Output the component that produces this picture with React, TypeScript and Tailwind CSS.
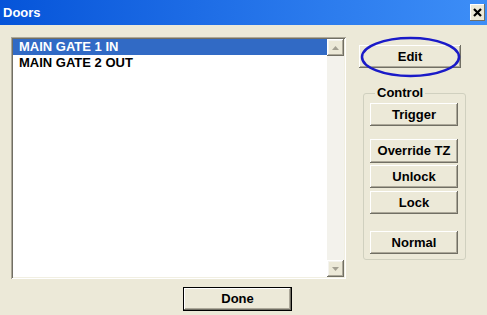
import React from "react";

const btn =
  "flex items-center justify-center bg-[#ece9d8] text-black font-bold text-[13px] shadow-[inset_-1px_-1px_#716f64,inset_1px_1px_#ffffff,inset_-2px_-2px_#aca899]";

function Btn({ label, cls }: { label: string; cls: string }) {
  return <div className={`${btn} ${cls}`}>{label}</div>;
}

function ScrollBtn({ up }: { up: boolean }) {
  return (
    <div className="w-[17px] h-[17px] flex items-center justify-center bg-[#ece9d8] shadow-[inset_-1px_-1px_#716f64,inset_1px_1px_#ffffff,inset_-2px_-2px_#aca899,inset_2px_2px_#f4f3ee]">
      <svg width="7" height="4" viewBox="0 0 7 4">
        {up ? (
          <polygon points="3.5,0 7,4 0,4" fill="#a3a092" />
        ) : (
          <polygon points="0,0 7,0 3.5,4" fill="#a3a092" />
        )}
      </svg>
    </div>
  );
}

export default function App() {
  return (
    <div
      className="w-[487px] h-[315px] bg-[#ece9d8] flex flex-col overflow-hidden"
      style={{ fontFamily: '"Liberation Sans", Arial, sans-serif' }}
    >
      <div className="h-[25px] flex items-center justify-between pl-[3px] pr-[2px] bg-gradient-to-r from-[#0554d9] to-[#3d8ef7]">
        <span className="text-white font-bold text-[13px]">Doors</span>
        <div className="w-[15px] h-[17px] flex items-center justify-center bg-[#ece9d8] shadow-[inset_-1px_-1px_#716f64,inset_1px_1px_#ffffff]">
          <svg width="9" height="9" viewBox="0 0 9 9">
            <path d="M1 1 L8 8 M8 1 L1 8" stroke="#000" strokeWidth="2.2" />
          </svg>
        </div>
      </div>
      <div className="flex flex-1 relative">
        <div className="flex flex-col pl-[11px] pt-[12px]">
          <div className="w-[335px] h-[242px] bg-white flex p-[2px] shadow-[inset_1px_1px_#aca899,inset_-1px_-1px_#ffffff,inset_2px_2px_#716f64,inset_-2px_-2px_#f1efe2]">
            <div className="flex-1 flex flex-col pt-[0px]">
              <div className="h-[16px] bg-[#316ac5] text-white font-bold text-[13px] leading-[16px] pl-[6px]">
                MAIN GATE 1 IN
              </div>
              <div className="h-[16px] text-black font-bold text-[13px] leading-[16px] pl-[6px]">
                MAIN GATE 2 OUT
              </div>
            </div>
            <div className="w-[17px] flex flex-col justify-between bg-[#f3f2ec]">
              <ScrollBtn up={true} />
              <ScrollBtn up={false} />
            </div>
          </div>
          <div className="ml-[172px] mt-[8px] w-[109px] h-[24px] border border-black flex">
            <Btn label="Done" cls="flex-1" />
          </div>
        </div>
        <div className="flex flex-col ml-[13px] pt-[20px]">
          <Btn label="Edit" cls="w-[102px] h-[23px]" />
          <fieldset className="ml-[4px] mt-[18px] w-[103px] h-[174px] border border-[#d0d0bf] rounded-[3px] pl-[6px] pr-[6px]">
            <legend className="ml-[5px] px-[2px] text-[13px] font-bold text-black leading-[14px]">Control</legend>
            <Btn label="Trigger" cls="w-[88px] h-[23px] mt-[3px]" />
            <Btn label="Override TZ" cls="w-[88px] h-[24px] mt-[13px]" />
            <Btn label="Unlock" cls="w-[88px] h-[23px] mt-[2px]" />
            <Btn label="Lock" cls="w-[88px] h-[23px] mt-[3px]" />
            <Btn label="Normal" cls="w-[88px] h-[23px] mt-[17px]" />
          </fieldset>
        </div>
        <svg
          className="absolute left-[360px] top-[11px]"
          width="101"
          height="42"
          viewBox="0 0 101 42"
        >
          <ellipse cx="50.5" cy="21" rx="48.5" ry="19" fill="none" stroke="#1a1ac8" strokeWidth="2.5" />
        </svg>
      </div>
    </div>
  );
}
